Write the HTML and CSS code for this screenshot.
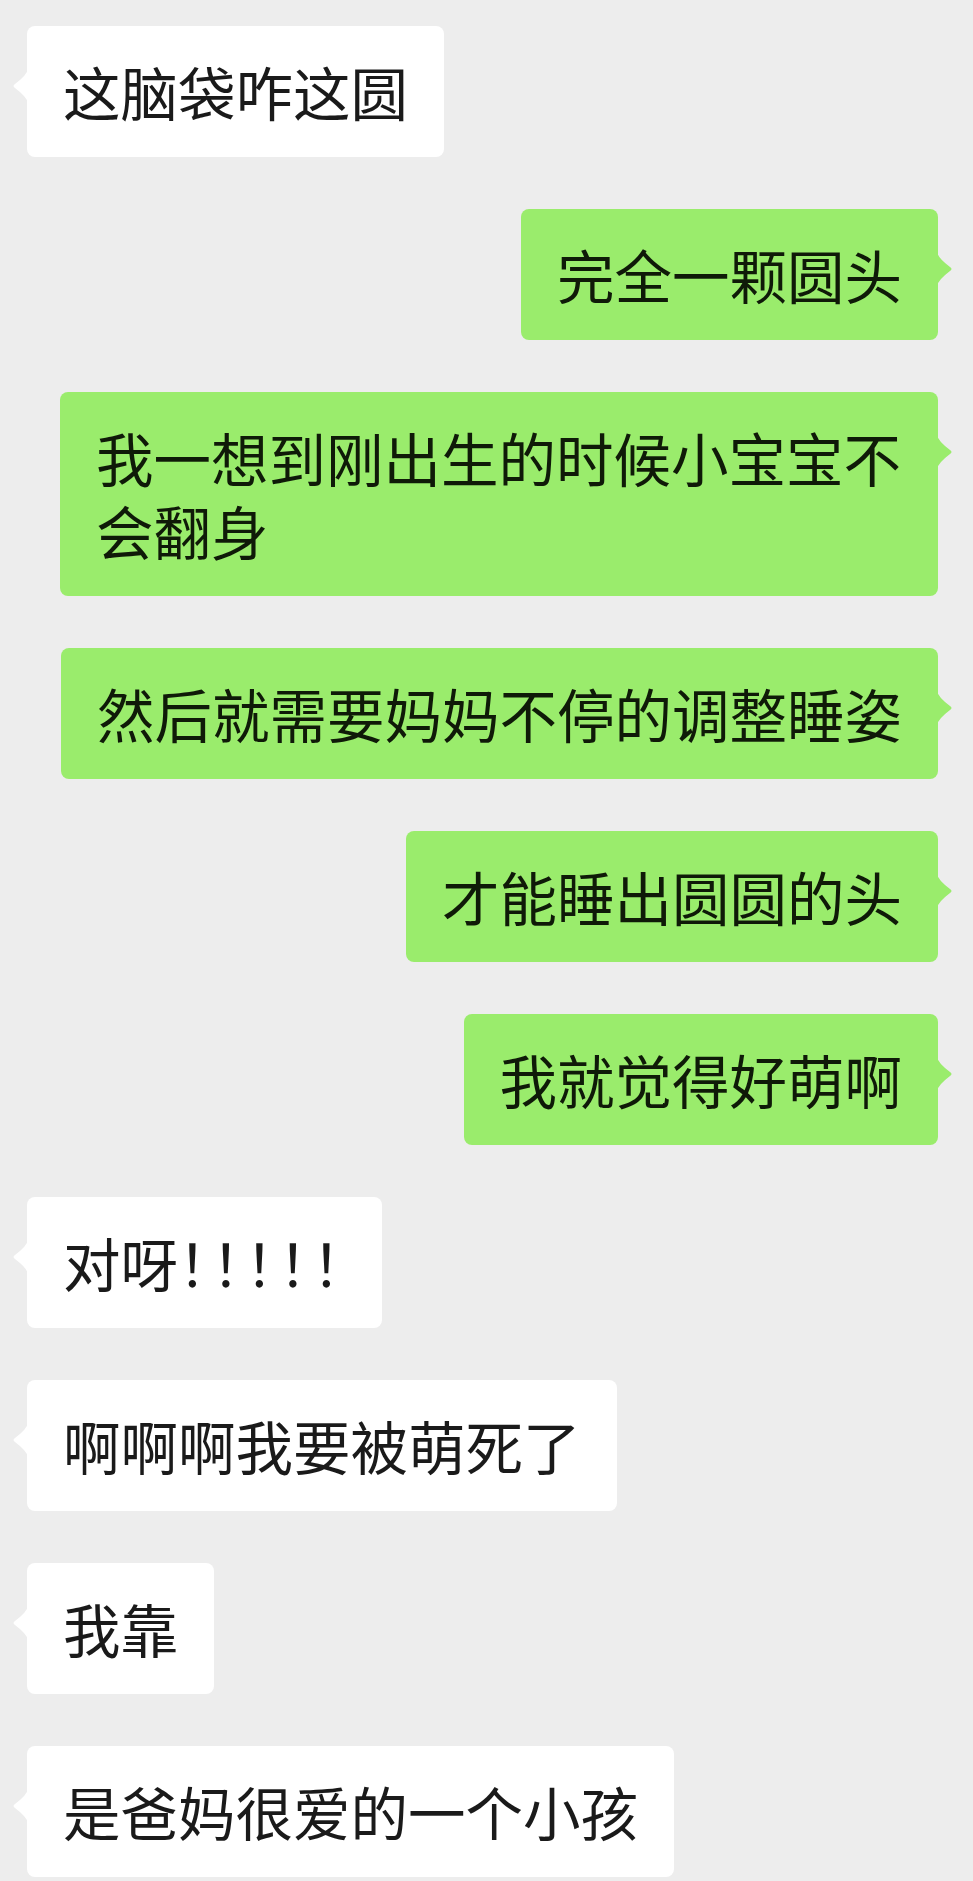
FILE: index.html
```html
<!DOCTYPE html>
<html lang="zh-CN">
<head>
    <meta charset="UTF-8">
    <meta name="viewport" content="width=device-width, initial-scale=1.0">
    <title>聊天记录</title>
    <link rel="stylesheet" href="styles.css">
</head>
<body>
    <div class="chat">
        <div class="row left"><div class="bubble">这脑袋咋这圆</div></div>
        <div class="row right"><div class="bubble">完全一颗圆头</div></div>
        <div class="row right"><div class="bubble">我一想到刚出生的时候小宝宝不会翻身</div></div>
        <div class="row right"><div class="bubble">然后就需要妈妈不停的调整睡姿</div></div>
        <div class="row right"><div class="bubble">才能睡出圆圆的头</div></div>
        <div class="row right"><div class="bubble">我就觉得好萌啊</div></div>
        <div class="row left"><div class="bubble">对呀<span class="bang">！！！！！</span></div></div>
        <div class="row left"><div class="bubble">啊啊啊我要被萌死了</div></div>
        <div class="row left"><div class="bubble">我靠</div></div>
        <div class="row left"><div class="bubble">是爸妈很爱的一个小孩</div></div>
    </div>
</body>
</html>
```

FILE: styles.css
```css
body {
    margin: 0;
    background-color: #ededed;
    font-family: "Noto Sans CJK SC", "Noto Sans", sans-serif;
    color: #1a1a1a;
}
.chat {
    padding: 26px 35px 0 27px;
    display: flex;
    flex-direction: column;
    gap: 52px;
}
.row {
    display: flex;
}
.row.right {
    justify-content: flex-end;
}
.bubble {
    position: relative;
    max-width: 878px;
    box-sizing: border-box;
    padding: 29px 36px;
    font-size: 57.5px;
    line-height: 73px;
    border-radius: 8px;
    background-color: #ffffff;
}
.row.right .bubble {
    background-color: #9aec6c;
    color: #0f1a08;
}
/* little pointer on the side of each bubble */
.bubble::before {
    content: "";
    position: absolute;
    top: 43px;
    width: 16px;
    height: 34px;
    background-color: inherit;
}
.row.left .bubble::before {
    left: -15px;
    clip-path: path("M16 0 Q15 6 3 15 Q0 17 3 19 Q15 28 16 34 Z");
}
.row.right .bubble::before {
    right: -15px;
    clip-path: path("M0 0 Q1 6 13 15 Q16 17 13 19 Q1 28 0 34 Z");
}
.bang {
    letter-spacing: -24px;
}
```
